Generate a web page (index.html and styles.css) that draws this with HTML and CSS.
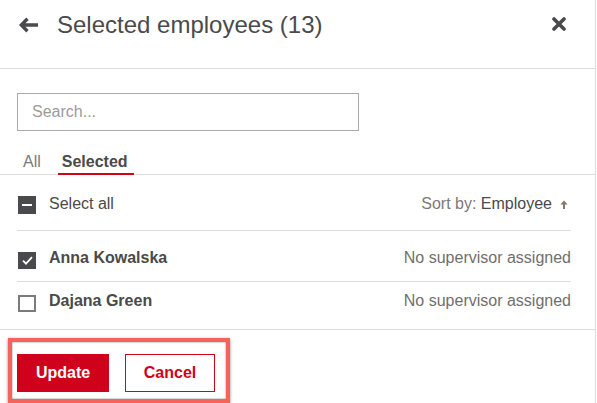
FILE: index.html
```html
<!DOCTYPE html>
<html lang="en">
<head>
<meta charset="utf-8">
<title>Selected employees</title>
<link rel="stylesheet" href="styles.css">
</head>
<body>
<div class="panel">
  <header class="header">
    <svg class="back" width="20" height="16" viewBox="0 0 20 16" aria-hidden="true">
      <path d="M19 8H3M8.5 1.8 2.3 8l6.2 6.2" fill="none" stroke="#4a4a4e" stroke-width="3.4" stroke-linecap="butt" stroke-linejoin="miter"/>
    </svg>
    <h1 class="title">Selected employees (13)</h1>
    <svg class="close" width="14" height="14" viewBox="0 0 14 14" aria-hidden="true">
      <path d="M2 2l10 10M12 2 2 12" fill="none" stroke="#4a4a4e" stroke-width="3.6" stroke-linecap="round"/>
    </svg>
  </header>

  <div class="search-wrap">
    <div class="search">Search...</div>
  </div>

  <nav class="tabs">
    <span class="tab">All</span>
    <span class="tab tab-active">Selected</span>
  </nav>

  <div class="list">
    <div class="row row-all">
      <span class="cb cb-partial"><span class="dash"></span></span>
      <span class="label">Select all</span>
      <span class="sort">Sort by: <span class="sort-key">Employee</span>
        <svg class="sort-arrow" width="8" height="9" viewBox="0 0 8 9" aria-hidden="true">
          <path d="M4 9V3.5" fill="none" stroke="#857a69" stroke-width="2"/>
          <path d="M4 0.6 7.6 4.6H0.4Z" fill="#857a69"/>
        </svg>
      </span>
    </div>
    <div class="row row-first">
      <span class="cb cb-checked">
        <svg width="17" height="17" viewBox="0 0 17 17" aria-hidden="true"><path d="M4 8.6l3 3 6-6.4" fill="none" stroke="#fff" stroke-width="1.8"/></svg>
      </span>
      <span class="name">Anna Kowalska</span>
      <span class="meta">No supervisor assigned</span>
    </div>
    <div class="row row-last">
      <span class="cb cb-empty"></span>
      <span class="name">Dajana Green</span>
      <span class="meta">No supervisor assigned</span>
    </div>
  </div>

  <footer class="footer">
    <div class="highlight">
      <button class="btn btn-primary">Update</button>
      <button class="btn btn-secondary">Cancel</button>
    </div>
  </footer>
</div>
</body>
</html>
```

FILE: styles.css
```css
* { box-sizing: border-box; }

html, body {
  margin: 0;
  padding: 0;
  background: #fff;
}

body {
  font-family: "Liberation Sans", Arial, sans-serif;
  color: #4a4a4a;
  font-size: 16px;
}

.panel {
  width: 596px;
  height: 403px;
  border-right: 1px solid #dcdcdc;
  overflow: hidden;
}

.header {
  height: 69px;
  border-bottom: 1px solid #dcdcdc;
  display: flex;
  align-items: flex-start;
  padding: 11px 0 0 19px;
}

.back {
  margin-top: 6px;
  flex: none;
}

.title {
  margin: 0 0 0 18px;
  font-size: 24px;
  font-weight: normal;
  line-height: 28px;
  color: #4a4a4a;
  flex: 1;
}

.close {
  margin: 6px 29px 0 0;
  flex: none;
}

.search-wrap {
  padding: 24px 0 0 17px;
}

.search {
  width: 342px;
  height: 38px;
  border: 1px solid #ababab;
  padding: 0 14px;
  display: flex;
  align-items: center;
  color: #9b9b9b;
  font-size: 16px;
}

.tabs {
  margin-top: 21px;
  display: flex;
  gap: 12px;
  padding-left: 18px;
  border-bottom: 1px solid #dcdcdc;
}

.tab {
  padding: 0 5px;
  line-height: 20px;
  height: 22px;
  color: #7a7a7a;
  font-size: 16px;
}

.tab-active {
  font-weight: bold;
  color: #4a4a4a;
  border-bottom: 2px solid #d0021b;
  padding: 0 6px 0 4px;
  margin-bottom: -1px;
  height: 23px;
}

.list {
  padding: 0 24px 0 17px;
}

.row {
  display: flex;
  align-items: flex-start;
  line-height: 20px;
}

.row-all {
  padding: 19px 0 16px;
  border-bottom: 1px solid #dcdcdc;
}

.row-first {
  padding: 17px 0 12px;
  border-bottom: 1px solid #dcdcdc;
}

.row-last {
  padding: 9px 0 17px;
}

.cb {
  width: 18px;
  height: 18px;
  flex: none;
  margin: 2px 13px 0 1px;
  display: flex;
  align-items: center;
  justify-content: center;
}

.row-first .cb,
.row-last .cb {
  margin-top: 4px;
  height: 17px;
}

.cb-partial {
  background: #4a4a4e;
}

.dash {
  width: 10px;
  height: 2px;
  background: #fff;
}

.cb-checked {
  background: #4a4a4e;
}

.cb-empty {
  border: 2px solid #7b7b7b;
}

.label {
  flex: 1;
  color: #4a4a4a;
}

.name {
  flex: 1;
  font-weight: bold;
  color: #4a4a4a;
}

.meta {
  color: #6f6f6f;
}

.sort {
  color: #7a7a7a;
  display: flex;
  align-items: center;
  white-space: pre;
}

.sort-key {
  color: #4a4a4a;
}

.sort-arrow {
  margin: 0 3px 0 8px;
}

.footer {
  border-top: 1px solid #dcdcdc;
  padding: 8px 0 0 8px;
}

.highlight {
  display: inline-flex;
  gap: 16px;
  border: 4px solid #f4645a;
  padding: 12px 11px 7px 5px;
  box-shadow: 0 1px 3px rgba(0, 0, 0, 0.45), inset 0 0 2px rgba(0, 0, 0, 0.55);
}

.btn {
  height: 38px;
  font-family: "Liberation Sans", Arial, sans-serif;
  font-size: 16px;
  font-weight: bold;
  padding: 0;
  cursor: pointer;
}

.btn-primary {
  width: 92px;
  background: #d0021b;
  color: #fff;
  border: none;
}

.btn-secondary {
  width: 90px;
  background: #fff;
  color: #d0021b;
  border: 1px solid #d0021b;
}
```
